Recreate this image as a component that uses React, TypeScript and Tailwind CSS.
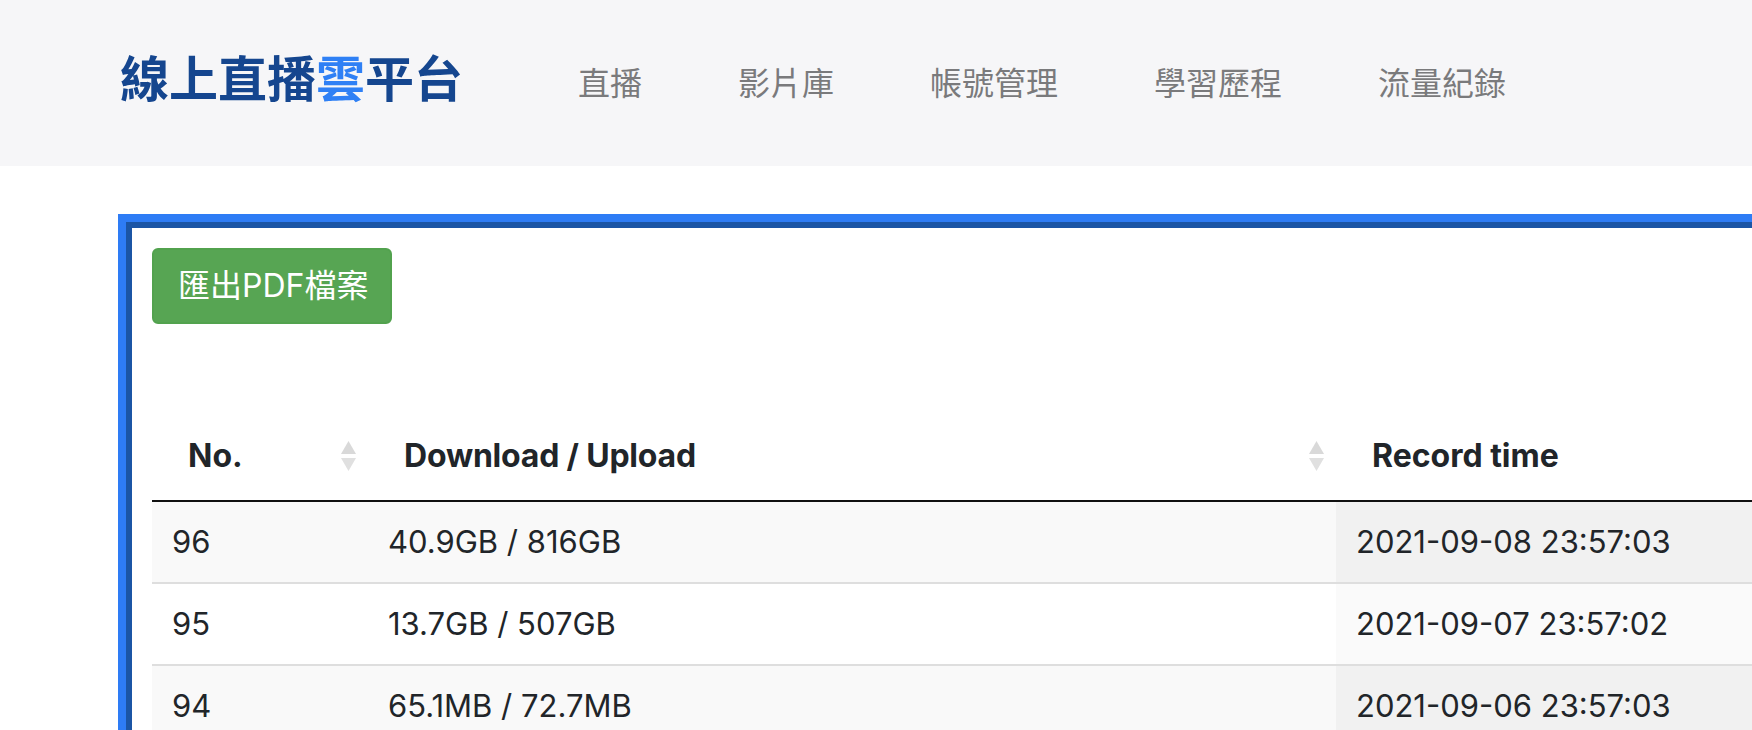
import React from 'react'

// 流量紀錄 — 線上直播雲平台 usage log page

const latin = "font-['Inter','Noto_Sans_CJK_TC',sans-serif]"
const cjk = "font-['Noto_Sans_CJK_TC','Noto_Sans',sans-serif]"

const navItems = ['直播', '影片庫', '帳號管理', '學習歷程', '流量紀錄']

interface TrafficRow {
  no: number
  usage: string
  time: string
}

const rows: TrafficRow[] = [
  { no: 96, usage: '40.9GB / 816GB', time: '2021-09-08 23:57:03' },
  { no: 95, usage: '13.7GB / 507GB', time: '2021-09-07 23:57:02' },
  { no: 94, usage: '65.1MB / 72.7MB', time: '2021-09-06 23:57:03' },
]

function SortBoth() {
  return (
    <svg width="15" height="30" viewBox="0 0 15 30" className="shrink-0">
      <polygon points="7.5,0 15,13 0,13" fill="#d9d9d9" />
      <polygon points="0,17 15,17 7.5,30" fill="#e0e0e0" />
    </svg>
  )
}

function Header() {
  return (
    <header className="flex h-[166px] items-center bg-[#f6f6f8] pl-[120px]">
      <h1 className={`${cjk} mb-[16px] text-[49px] font-bold leading-none text-[#15468f]`}>
        線上直播<span className="text-[#2f80f5]">雲</span>平台
      </h1>
      <nav className="mb-[4px] ml-[115px]">
        <ul className={`${cjk} flex gap-[96px] text-[32px] leading-none text-[#7a7a7c]`}>
          {navItems.map((item) => (
            <li key={item}>{item}</li>
          ))}
        </ul>
      </nav>
    </header>
  )
}

function TrafficTable() {
  return (
    <table className={`${latin} w-[1640px] table-fixed border-collapse text-[#212529]`}>
      <colgroup>
        <col className="w-[216px]" />
        <col className="w-[968px]" />
        <col />
      </colgroup>
      <thead className="text-[32px]">
        <tr className="border-b-2 border-[#111]">
          <th className="py-5 pl-[36px] pr-[12px] text-left font-bold leading-[48px]">
            <div className="flex items-center justify-between">
              <span>No.</span>
              <SortBoth />
            </div>
          </th>
          <th className="py-5 pl-[36px] pr-[12px] text-left font-bold leading-[48px]">
            <div className="flex items-center justify-between">
              <span className="tracking-[-0.2px]">Download / Upload</span>
              <SortBoth />
            </div>
          </th>
          <th className="py-5 pl-[36px] text-left font-bold leading-[48px]">Record time</th>
        </tr>
      </thead>
      <tbody className="text-[31px]">
        {rows.map((row, i) => {
          const odd = i % 2 === 0
          return (
            <tr key={row.no} className={`border-b-2 border-[#dedede] ${odd ? 'bg-[#f9f9f9]' : 'bg-white'}`}>
              <td className="px-5 py-4 leading-[48px]">{row.no}</td>
              <td className="px-5 py-4 leading-[48px]">{row.usage}</td>
              <td className={`px-5 py-4 leading-[48px] ${odd ? 'bg-[#f1f1f1]' : 'bg-[#fafafa]'}`}>{row.time}</td>
            </tr>
          )
        })}
      </tbody>
    </table>
  )
}

export default function App() {
  return (
    <div className="h-[730px] w-full overflow-hidden bg-white">
      <Header />
      <div className="ml-[118px] mt-[48px] w-[1720px] border-[8px] border-[#2e7cf5]">
        <div className="border-l-[6px] border-t-[6px] border-[#1b55a5] p-[20px]">
          <button
            type="button"
            className={`${latin} rounded-[6px] border-2 border-[#52a24e] bg-[#57a553] py-[12px] pl-[24px] pr-[22px] text-[32px] leading-[48px] text-white`}
          >
            匯出PDF檔案
          </button>
          <div className="mt-[88px]">
            <TrafficTable />
          </div>
        </div>
      </div>
    </div>
  )
}
